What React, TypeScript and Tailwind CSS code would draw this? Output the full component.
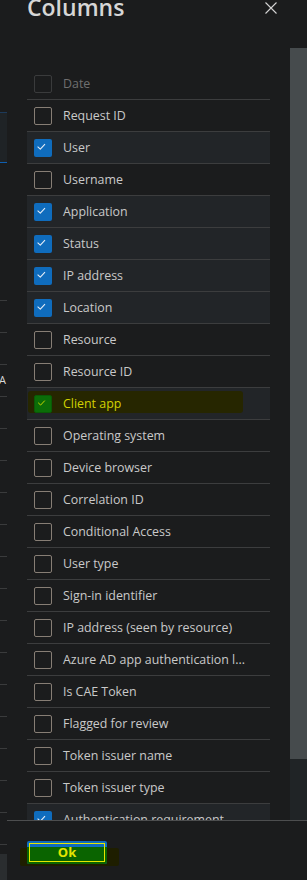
import React from "react";

type Col = { label: string; checked?: boolean; dim?: boolean; marked?: boolean };

const columns: Col[] = [
  { label: "Date", dim: true },
  { label: "Request ID" },
  { label: "User", checked: true },
  { label: "Username" },
  { label: "Application", checked: true },
  { label: "Status", checked: true },
  { label: "IP address", checked: true },
  { label: "Location", checked: true },
  { label: "Resource" },
  { label: "Resource ID" },
  { label: "Client app", checked: true, marked: true },
  { label: "Operating system" },
  { label: "Device browser" },
  { label: "Correlation ID" },
  { label: "Conditional Access" },
  { label: "User type" },
  { label: "Sign-in identifier" },
  { label: "IP address (seen by resource)" },
  { label: "Azure AD app authentication l..." },
  { label: "Is CAE Token" },
  { label: "Flagged for review" },
  { label: "Token issuer name" },
  { label: "Token issuer type" },
  { label: "Authentication requirement", checked: true },
];

function Check({ color }: { color: string }) {
  return (
    <svg width="18" height="18" viewBox="0 0 18 18" fill="none">
      <path d="M3.6 7.6 L6.3 10.2 L11 5.2" stroke={color} strokeWidth="1.1" strokeLinejoin="round" />
    </svg>
  );
}

function Checkbox({ col }: { col: Col }) {
  if (col.marked) {
    return (
      <span className="w-[18px] h-[18px] rounded-[2px] bg-[#0b6d08] border border-[#0a5a06] flex items-center justify-center shrink-0">
        <Check color="#c9d800" />
      </span>
    );
  }
  if (col.checked) {
    return (
      <span className="w-[18px] h-[18px] rounded-[2px] bg-[#0f6cbd] flex items-center justify-center shrink-0">
        <Check color="#e6eef8" />
      </span>
    );
  }
  return (
    <span
      className={
        "block w-[18px] h-[18px] rounded-[2px] border shrink-0 " +
        (col.dim ? "border-[#3a3b3c]" : "border-[#877e75]")
      }
    />
  );
}

function ColumnRow({ col }: { col: Col }) {
  return (
    <div
      className={
        "relative h-[32px] shrink-0 border-b border-[#3c3d3e] flex items-center pl-[7px] " +
        (col.checked ? "bg-[#222528]" : "")
      }
    >
      {col.marked && (
        <span className="absolute left-[1px] right-[27px] top-[3px] bottom-[6px] bg-[#262600] rounded-[3px]" />
      )}
      <span className="relative block">
        <Checkbox col={col} />
      </span>
      <span
        className={
          "relative ml-[11px] mt-[2px] text-[12.4px] whitespace-nowrap " +
          (col.dim ? "text-[#6f6f6f]" : col.marked ? "text-[#d2d200]" : "text-[#c9c9c9]")
        }
      >
        {col.label}
      </span>
    </div>
  );
}

export default function App() {
  const stripLines = Array.from({ length: 17 });

  return (
    <div className="w-[307px] h-[880px] bg-[#1b1c1d] overflow-hidden flex flex-col font-['Open_Sans',sans-serif]">
      <div className="flex h-[820px] shrink-0 overflow-hidden">
        {/* page behind, left edge */}
        <div className="w-[7px] shrink-0 flex flex-col overflow-hidden">
          <div className="h-[112px] shrink-0" />
          <div className="h-[51px] shrink-0 bg-[#1f2326] border-t border-[#1d3a5a] border-b border-b-[#0f5fb0]" />
          <div className="h-[137px] shrink-0" />
          {stripLines.map((_, i) => (
            <div key={i} className="h-[32px] shrink-0 border-t border-[#3a3b3c] relative">
              {i === 2 && (
                <span className="absolute left-[-1px] top-[9px] text-[11px] leading-none text-[#d8d8d8]">A</span>
              )}
            </div>
          ))}
        </div>

        {/* panel */}
        <div className="w-[283px] shrink-0 flex flex-col overflow-hidden">
          <div className="h-[68px] shrink-0 flex justify-between items-start pl-[20px] pr-[13px]">
            <h1 className="mt-[-5px] text-[23px] leading-[24px] font-semibold text-[#d6d6d6]">
              Columns
            </h1>
            <svg className="mt-[2px]" width="12" height="12" viewBox="0 0 12 12" fill="none">
              <path d="M0.5 0.5 L11.5 11.5 M11.5 0.5 L0.5 11.5" stroke="#d4d4d4" strokeWidth="1.1" />
            </svg>
          </div>
          <div className="pl-[20px] pr-[20px] flex flex-col shrink-0">
            {columns.map((col) => (
              <ColumnRow key={col.label} col={col} />
            ))}
          </div>
        </div>

        {/* scrollbar of page behind */}
        <div className="w-[17px] shrink-0 pt-[48px] flex flex-col">
          <div className="h-[711px] shrink-0 bg-[#464b4d]" />
          <div className="flex-1 bg-[#202426]" />
        </div>
      </div>

      {/* footer */}
      <div className="flex h-[60px] shrink-0">
        <div className="w-[7px] shrink-0 flex flex-col">
          <div className="h-[24px]" />
          <div className="h-[10px] border-t border-[#3a3b3c]" />
          <div className="flex-1 bg-[#2a2d2f]" />
        </div>
        <div className="flex-1 border-t border-[#4d4e4f] pl-[20px] pt-[20px]">
          <div className="relative w-[80px] h-[23px]">
            <span className="absolute left-[-7px] right-[-12px] top-[7px] bottom-[-2px] bg-[#1e1e00] rounded-[2px]" />
            <span className="absolute inset-0 bg-[#0f6cbd] rounded-[2px]" />
            <span className="absolute left-0 right-0 top-[6px] bottom-0 bg-[#0a6400] rounded-b-[2px]" />
            <span className="absolute inset-[2px] border border-[#e6e600]" />
            <span className="absolute inset-0 flex items-center justify-center text-[13px] font-bold text-[#e4e400]">
              Ok
            </span>
          </div>
        </div>
      </div>
    </div>
  );
}
